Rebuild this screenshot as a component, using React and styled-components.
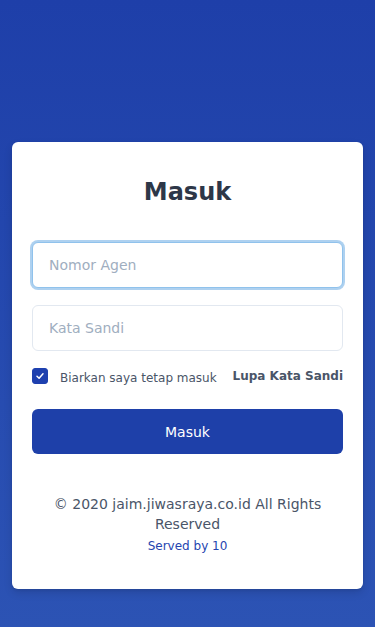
import React, { useState } from 'react';
import styled, { createGlobalStyle } from 'styled-components';

const GlobalStyle = createGlobalStyle`
	html, body {
		margin: 0;
		padding: 0;
		height: 100%;
	}
	body {
		font-family: "DejaVu Sans", "Liberation Sans", sans-serif;
		background: linear-gradient(180deg, #1e3fa9 0%, #2c53b4 100%);
		min-height: 627px;
	}
	* { box-sizing: border-box; }
`;

const Page = styled.div`
	min-height: 627px;
	padding: 142px 12px 38px;
	display: flex;
	flex-direction: column;
`;

const Card = styled.div`
	background: #fff;
	border-radius: 6px;
	box-shadow: 0 4px 8px rgba(0, 0, 0, 0.12), 0 1px 3px rgba(0, 0, 0, 0.08);
	padding: 34px 20px 35px;
	display: flex;
	flex-direction: column;
`;

const Title = styled.h1`
	margin: 0 0 34px;
	font-size: 24px;
	line-height: 32px;
	font-weight: bold;
	color: #2d3748;
	text-align: center;
`;

const Field = styled.input`
	display: block;
	width: 100%;
	height: 46px;
	padding: 0 16px;
	font-family: inherit;
	font-size: 14px;
	color: #2d3748;
	background: #fff;
	border: 1px solid ${props => props.focused ? '#90c2ec' : '#e2e8f0'};
	border-radius: 6px;
	outline: none;
	box-shadow: ${props => props.focused ? '0 0 0 2px rgba(120, 178, 230, 0.6)' : 'none'};
	margin-bottom: 17px;

	&::placeholder {
		color: #a0aec0;
	}
`;

const OptionsRow = styled.div`
	display: flex;
	align-items: center;
	justify-content: space-between;
	margin-top: -1px;
	margin-bottom: 24px;
`;

const Remember = styled.label`
	display: flex;
	align-items: center;
	gap: 12px;
	font-size: 12px;
	color: #4a5568;
	cursor: pointer;
`;

const Box = styled.span`
	width: 16px;
	height: 16px;
	border-radius: 3px;
	background: ${props => props.checked ? '#1e40af' : '#fff'};
	border: 1px solid ${props => props.checked ? '#1e40af' : '#cbd5e0'};
	display: flex;
	align-items: center;
	justify-content: center;
	flex-shrink: 0;
`;

const RememberText = styled.span`
	margin-top: 4px;
`;

const Forgot = styled.a`
	font-size: 12px;
	font-weight: bold;
	color: #4a5568;
	text-decoration: none;
`;

const Button = styled.button`
	width: 100%;
	height: 45px;
	border: none;
	border-radius: 6px;
	background: #1e40a9;
	color: #fff;
	font-family: inherit;
	font-size: 14px;
	cursor: pointer;
	margin-bottom: 40px;
`;

const Footer = styled.div`
	text-align: center;
	color: #4a5568;
	font-size: 14px;
	line-height: 20px;
	padding: 0 8px;
`;

const Served = styled.div`
	margin-top: 4px;
	font-size: 12px;
	line-height: 16px;
	color: #2545b0;
`;

const App = () => {
	const [checked, setChecked] = useState(true);

	return (
		<>
			<GlobalStyle />
			<Page>
				<Card>
					<Title>Masuk</Title>
					<Field focused placeholder="Nomor Agen" />
					<Field type="password" placeholder="Kata Sandi" />
					<OptionsRow>
						<Remember onClick={() => setChecked(!checked)}>
							<Box checked={checked}>
								{checked &&
									<svg width="10" height="10" viewBox="0 0 10 10">
										<path d="M2 5.2 L4.1 7.2 L8 2.8" fill="none" stroke="#fff" strokeWidth="1.5" strokeLinecap="round" strokeLinejoin="round" />
									</svg>
								}
							</Box>
							<RememberText>Biarkan saya tetap masuk</RememberText>
						</Remember>
						<Forgot href="#">Lupa Kata Sandi</Forgot>
					</OptionsRow>
					<Button>Masuk</Button>
					<Footer>
						© 2020 jaim.jiwasraya.co.id All Rights Reserved
						<Served>Served by 10</Served>
					</Footer>
				</Card>
			</Page>
		</>
	);
};

export default App;
